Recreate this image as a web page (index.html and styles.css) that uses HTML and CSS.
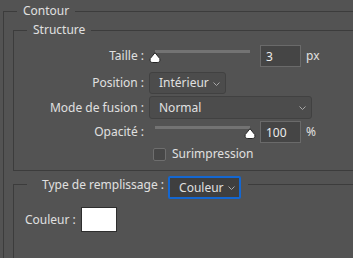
FILE: index.html
```html
<!DOCTYPE html>
<html lang="fr">
<head>
    <meta charset="UTF-8">
    <meta name="viewport" content="width=device-width, initial-scale=1.0">
    <title>Contour</title>
    <link rel="stylesheet" href="styles.css">
</head>
<body>
    <fieldset class="group outer">
        <legend class="group-title">Contour</legend>

        <fieldset class="group structure">
            <legend class="group-title">Structure</legend>

            <div class="row">
                <label class="row-label">Taille :</label>
                <div class="slider">
                    <div class="track"></div>
                    <span class="thumb" style="left: 0%">
                        <svg width="12" height="11" viewBox="0 0 12 11"><path d="M6 0.7 L10.8 6.6 Q11.6 10.5 8.2 10.5 L3.8 10.5 Q0.4 10.5 1.2 6.6 Z" fill="#fff" stroke="#262626" stroke-width="1"/></svg>
                    </span>
                </div>
                <input class="num" type="text" value="3">
                <span class="unit">px</span>
            </div>

            <div class="row row-pos">
                <label class="row-label">Position :</label>
                <div class="dropdown pos">
                    <span>Intérieur</span>
                    <svg class="chev" width="7" height="4" viewBox="0 0 7 4"><path d="M0.5 0.5 L3.5 3.5 L6.5 0.5" fill="none" stroke="#a8a8a8" stroke-width="1"/></svg>
                </div>
            </div>

            <div class="row row-mode">
                <label class="row-label">Mode de fusion :</label>
                <div class="dropdown mode">
                    <span>Normal</span>
                    <svg class="chev" width="7" height="4" viewBox="0 0 7 4"><path d="M0.5 0.5 L3.5 3.5 L6.5 0.5" fill="none" stroke="#a8a8a8" stroke-width="1"/></svg>
                </div>
            </div>

            <div class="row row-opa">
                <label class="row-label">Opacité :</label>
                <div class="slider">
                    <div class="track"></div>
                    <span class="thumb" style="left: 100%">
                        <svg width="12" height="11" viewBox="0 0 12 11"><path d="M6 0.7 L10.8 6.6 Q11.6 10.5 8.2 10.5 L3.8 10.5 Q0.4 10.5 1.2 6.6 Z" fill="#fff" stroke="#262626" stroke-width="1"/></svg>
                    </span>
                </div>
                <input class="num" type="text" value="100">
                <span class="unit">%</span>
            </div>

            <div class="row row-check">
                <span class="row-label"></span>
                <label class="check">
                    <span class="box"></span>
                    Surimpression
                </label>
            </div>
        </fieldset>

        <fieldset class="group fill">
            <legend class="fill-title">
                <span class="fill-label">Type de remplissage :</span>
                <span class="dropdown active">
                    <span>Couleur</span>
                    <svg class="chev" width="7" height="4" viewBox="0 0 7 4"><path d="M0.5 0.5 L3.5 3.5 L6.5 0.5" fill="none" stroke="#a8a8a8" stroke-width="1"/></svg>
                </span>
            </legend>

            <div class="color-row">
                <label>Couleur :</label>
                <span class="swatch"></span>
            </div>
        </fieldset>
    </fieldset>
</body>
</html>
```

FILE: styles.css
```css
body{
    margin: 0;
    background: #535353;
    color: #e0e0e0;
    font-family: "Noto Sans", "Segoe UI", sans-serif;
    font-size: 12px;
    line-height: 16px;
    overflow: hidden;
}

.group{
    margin: 0;
    padding: 0;
    min-width: 0;
    border: none;
    border-left: 1px solid #3c3c3c;
    border-top: 1px solid #3c3c3c;
}

.group-title{
    margin-left: 13px;
    padding: 0 6px;
    height: 16px;
}

.outer{
    margin: 3px 0 0 3px;
}

.structure{
    margin: 3px 0 0 9px;
    padding: 7px 0 8px;
    border-bottom: 1px solid #3c3c3c;
}

.row{
    display: flex;
    align-items: center;
    height: 22px;
}

.row-pos{
    margin-top: 5px;
}

.row-mode{
    margin-top: 2px;
    height: 23px;
}

.row-opa{
    margin-top: 2px;
}

.row-check{
    margin-top: 3px;
    height: 16px;
}

.row-label{
    width: 130px;
    margin-right: 5px;
    text-align: right;
    flex: none;
}

/* slider */
.slider{
    position: relative;
    width: 95px;
    height: 14px;
    margin-left: 6px;
}

.track{
    height: 3px;
    margin-top: 1px;
    background: #737373;
}

.thumb{
    position: absolute;
    top: 3px;
    margin-left: -6px;
    width: 12px;
    height: 11px;
    display: block;
}

.thumb svg{
    display: block;
}

.num{
    width: 41px;
    height: 22px;
    box-sizing: border-box;
    margin: 0 0 0 10px;
    padding: 0 5px;
    border: 1px solid #6a6a6a;
    background: #454545;
    color: #ececec;
    font: inherit;
    outline: none;
}

.unit{
    margin-left: 5px;
}

/* dropdowns */
.dropdown{
    display: flex;
    align-items: center;
    justify-content: space-between;
    box-sizing: border-box;
    height: 22px;
    padding: 0 5px 0 9px;
    border: 1px solid #414141;
    border-radius: 3px;
    background: #4c4c4c;
}

.dropdown.pos{
    width: 77px;
}

.dropdown.mode{
    width: 163px;
    height: 23px;
}

.chev{
    display: block;
    margin-top: 1px;
}

/* checkbox */
.check{
    display: flex;
    align-items: center;
    margin-left: 4px;
    gap: 6px;
}

.box{
    width: 13px;
    height: 13px;
    box-sizing: border-box;
    border: 1px solid #6e6e6e;
    border-radius: 2px;
    background: #474747;
}

/* fill section */
.fill{
    margin: 5px 0 0 9px;
    padding: 15px 0 26px;
}

.fill-title{
    display: flex;
    align-items: flex-start;
    gap: 4px;
    height: 16px;
    margin-left: 13px;
    padding: 0 7px 0 15px;
}

.fill-label{
    padding-top: 1px;
}

.dropdown.active{
    width: 73px;
    height: 23px;
    padding: 0 4px 0 9px;
    border: 2px solid #1467d1;
    border-radius: 2px;
    background: #3f3f3f;
}

.color-row{
    display: flex;
    align-items: center;
    gap: 5px;
    padding-left: 11px;
}

.swatch{
    width: 36px;
    height: 25px;
    box-sizing: border-box;
    border: 1px solid #2e2e2e;
    background: #fff;
}
```
